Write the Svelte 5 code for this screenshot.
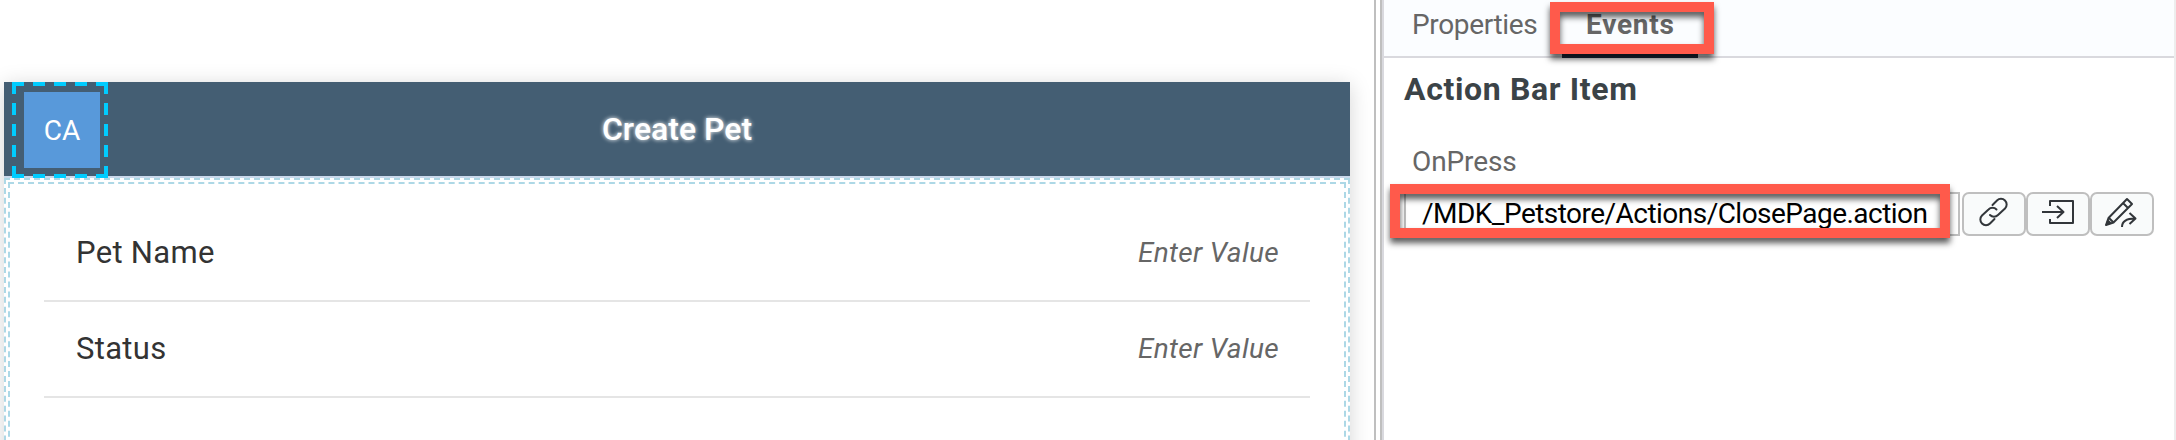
<script>
  const fields = [
    { label: 'Pet Name', hint: 'Enter Value' },
    { label: 'Status', hint: 'Enter Value' }
  ];
</script>

<div class="app">
  <section class="canvas">
    <div class="card">
      <header>
        <div class="item">
          <svg class="selection" width="96" height="96" viewBox="0 0 96 96">
            <g fill="none" stroke="#0cf" stroke-width="4" stroke-dasharray="12 9">
              <path d="M0 2H96M0 94H96M2 0V96M94 0V96" />
            </g>
          </svg>
          <div class="tile"><span>CA</span></div>
        </div>
        <h1>Create Pet</h1>
      </header>
      <div class="outer">
        <div class="inner">
          {#each fields as f}
            <div class="row">
              <span class="label">{f.label}</span>
              <em>{f.hint}</em>
            </div>
          {/each}
        </div>
      </div>
    </div>
  </section>
  <div class="splitter"></div>
  <aside>
    <nav>
      <span class="tab">Properties</span>
      <span class="tab active">Events<i class="mark m1"></i></span>
    </nav>
    <h2>Action Bar Item</h2>
    <p>OnPress</p>
    <div class="control">
      <div class="input"><span>/MDK_Petstore/Actions/ClosePage.action</span><i class="mark m2"></i></div>
      <button aria-label="Link">
        <svg width="60" height="40" viewBox="0 0 60 40"><g fill="none" stroke="#32363a" stroke-width="2" stroke-linecap="round" stroke-linejoin="round"><path d="M28.500 11L33 6.500a5.600 5.600 0 0 1 8 8L34 21a5.600 5.600 0 0 1-8 0" /><path d="M30.500 25L26 29.500a5.600 5.600 0 0 1-8-8L24.500 15.500a5.600 5.600 0 0 1 8 0" /></g></svg>
      </button>
      <button aria-label="Open">
        <svg width="60" height="40" viewBox="0 0 60 40"><path d="M22 12V7H45V29H22V25M14 18H35M29 12L35.500 18L29 24" fill="none" stroke="#32363a" stroke-width="2" stroke-linejoin="round" /></svg>
      </button>
      <button aria-label="Edit">
        <svg width="60" height="40" viewBox="0 0 60 40"><g fill="none" stroke="#32363a" stroke-width="2" stroke-linejoin="round"><path d="M14 31L16.500 24L35 5L40 10L21.500 28.500ZM31 9L36 14M17 24L21 28" /><path d="M30 33C30 27 34 24.500 43 24.500M37.500 19L43.500 24.500L37.500 30" /></g><path d="M13.500 31.500L15.500 25L20 29Z" fill="#32363a" /></svg>
      </button>
    </div>
  </aside>
</div>

<style>
  :global(body) { background: #fff; overflow: hidden; }
  * { box-sizing: border-box; }
  .app { display: flex; width: 2176px; height: 440px; overflow: hidden; font-family: Roboto, "Liberation Sans", sans-serif; white-space: nowrap; }
  .canvas { width: 1374px; padding: 82px 0 0 4px; overflow: hidden; }
  .card { width: 1346px; height: 500px; background: #fff; box-shadow: 0 3px 20px rgba(0,0,0,.17); }
  header { position: relative; display: flex; align-items: center; justify-content: center; height: 96px; background: #445e73; border-bottom: 2px solid #c9d9ec; }
  .item { position: absolute; left: 8px; top: 0; width: 96px; height: 96px; padding: 10px 8px 10px 12px; }
  .selection { position: absolute; inset: 0; }
  .tile { width: 76px; height: 76px; display: flex; align-items: center; justify-content: center; background: #5899da; color: #fff; font-size: 28px; }
  h1 { margin: 0; font-size: 32px; line-height: 40px; font-weight: 500; color: #fff; text-shadow: 0 0 4px #fff; }
  .outer { height: 402px; padding: 2px; border: 2px dashed lightblue; }
  .inner { height: 394px; padding: 22px 34px 0; border: 2px dashed lightblue; }
  .row { display: flex; justify-content: space-between; align-items: center; height: 96px; padding: 0 31px 1px 32px; border-bottom: 2px solid #e5e5e5; font-size: 31px; letter-spacing: .3px; color: #333; }
  em { font-size: 28px; letter-spacing: .35px; color: #666; }
  .splitter { width: 10px; border-left: 2px solid #bfbfbf; border-right: 2px solid #d9d9de; background: linear-gradient(90deg, #fff 4px, #bfbfbf 4px); }
  aside { width: 792px; border-right: 2px solid #ededed; }
  nav { display: flex; height: 58px; padding-left: 28px; background: #fbfdff; border-bottom: 2px solid #d9d9de; font-size: 28px; line-height: 49px; color: #666; }
  .tab { width: 126px; letter-spacing: -.35px; }
  .tab.active { position: relative; height: 58px; margin-left: 24px; padding: 0 24px; font-weight: 700; width: 136px; letter-spacing: .75px; border-bottom: 4px solid #1b2a3e; }
  .mark { position: absolute; border: 10px solid #ff5a4b; filter: drop-shadow(0 5px 3px rgba(0,0,0,.65)); }
  .m1 { left: -12px; top: 2px; width: 164px; height: 52px; }
  .m2 { left: -16px; top: -10px; width: 560px; height: 54px; }
  h2 { margin: 13px 0 0 20px; font-size: 32px; line-height: 36px; letter-spacing: .65px; color: #3b4347; }
  p { margin: 38px 0 0 28px; font-size: 28px; line-height: 34px; letter-spacing: -.1px; color: #666; }
  .control { display: flex; margin: 13px 0 0 20px; }
  .input { position: relative; width: 556px; height: 44px; margin-right: 2px; padding-left: 16px; border: 2px solid #bfbfbf; font-size: 28px; line-height: 40px; letter-spacing: -.53px; color: #000; }
  button { display: block; width: 64px; height: 44px; padding: 0; border: 2px solid #bfbfbf; border-radius: 7px; background: #f9fbfb; }
  svg { display: block; }
</style>
